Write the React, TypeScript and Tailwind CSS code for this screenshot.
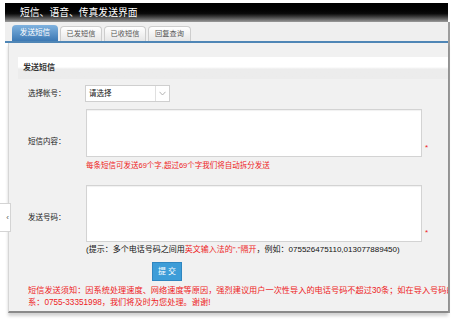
import React from "react";

const font = { fontFamily: '"Liberation Sans", "Noto Sans CJK SC", sans-serif' };

export default function App() {
  return (
    <div className="relative w-[458px] h-[320px] overflow-hidden bg-white" style={font}>
      {/* collapse handle */}
      <div className="absolute left-0 top-[203px] w-[11px] h-[29px] bg-white border border-l-0 border-[#d4d4d4] flex items-center justify-end pr-[1px] text-[8px] text-[#555] z-10">
        ‹
      </div>

      <div className="ml-[5px] pt-[3px] w-[445px]">
        {/* title bar */}
        <div className="h-[19px] w-[443px] bg-linear-to-b from-black via-[#0a0a0a] via-55% to-[#9c9c9c] flex items-center pl-[15px] text-white text-[9.8px] leading-none">
          短信、语音、传真发送界面
        </div>

        <div className="border-r-2 border-[#9d9d9d] w-[445px]">
          {/* tabs */}
          <div className="h-[19px] bg-[#efefef] flex items-end gap-[2px] pl-[7px]">
            <div className="w-[46px] h-[16px] rounded-t-[4px] bg-linear-to-b from-[#7fb2df] to-[#3c79b4] text-white text-[7.6px] flex items-center justify-center leading-none">
              发送短信
            </div>
            <div className="w-[42px] h-[15px] rounded-t-[4px] border border-b-0 border-[#cdcdcd] bg-linear-to-b from-white to-[#e6e6e6] text-[#555] text-[7.2px] flex items-center justify-center leading-none">
              已发短信
            </div>
            <div className="w-[42px] h-[15px] rounded-t-[4px] border border-b-0 border-[#cdcdcd] bg-linear-to-b from-white to-[#e6e6e6] text-[#555] text-[7.2px] flex items-center justify-center leading-none">
              已收短信
            </div>
            <div className="w-[43px] h-[15px] rounded-t-[4px] border border-b-0 border-[#cdcdcd] bg-linear-to-b from-white to-[#e6e6e6] text-[#555] text-[7.2px] flex items-center justify-center leading-none">
              回复查询
            </div>
          </div>
          <div className="h-[2px] bg-[#4f86b6]" />

          {/* content */}
          <div className="ml-[3px] h-[270px] bg-[#f1f1f1] border-l border-[#d6d6d6] border-b-2 border-b-[#8a8a8a] shadow-[0_3px_3px_rgba(0,0,0,0.18)] pt-[14px] overflow-hidden">
            <div className="ml-[9px] h-[22px] bg-linear-to-b from-white via-white via-45% to-[#ececec] to-55% flex items-center pl-[5px] text-[8px] font-bold text-[#333] leading-none">
              发送短信
            </div>

            <div className="pl-[19px]">
              {/* select row */}
              <div className="mt-[6px] flex items-center">
                <div className="w-[57px] text-[7.5px] text-[#222] leading-none">选择帐号：</div>
                <div className="w-[85px] h-[17px] bg-white border border-[#cfcfcf] flex items-stretch">
                  <div className="flex-1 flex items-center pl-[3px] text-[7.5px] text-[#111] leading-none">请选择</div>
                  <div className="w-[14px] border-l border-[#e0e0e0] flex items-center justify-center">
                    <svg width="7" height="5" viewBox="0 0 7 5">
                      <polyline points="0.5,0.8 3.5,4 6.5,0.8" fill="none" stroke="#aaaaaa" strokeWidth="0.9" />
                    </svg>
                  </div>
                </div>
              </div>

              {/* content row */}
              <div className="mt-[7px] flex items-start">
                <div className="w-[58px] pt-[27px] text-[7.5px] text-[#222] leading-[12px]">短信内容：</div>
                <div className="w-[336px] h-[48px] bg-white border border-[#d3d3d3] shadow-[inset_0_1px_1px_rgba(0,0,0,0.06)]" />
                <div className="self-end mb-[5px] ml-[3px] text-[8px] text-[#ee1c24] leading-none">*</div>
              </div>
              <div className="mt-[2px] ml-[58px] text-[7.5px] leading-[13px] text-[#ee1c24] whitespace-nowrap">
                每条短信可发送69个字,超过69个字我们将自动拆分发送
              </div>

              {/* numbers row */}
              <div className="mt-[13px] flex items-start">
                <div className="w-[58px] pt-[27px] text-[7.5px] text-[#222] leading-[12px]">发送号码：</div>
                <div className="w-[336px] h-[57px] bg-white border border-[#d3d3d3] shadow-[inset_0_1px_1px_rgba(0,0,0,0.06)]" />
                <div className="self-end mb-[5px] ml-[3px] text-[8px] text-[#ee1c24] leading-none">*</div>
              </div>
              <div className="mt-[2px] ml-[58px] text-[8px] leading-[12px] text-[#111] whitespace-nowrap">
                (提示：多个电话号码之间用<span className="text-[#ee1c24]">英文输入法的","隔开</span>，例如：075526475110,013077889450)
              </div>

              {/* submit */}
              <div className="mt-[6px] ml-[124px]">
                <button className="w-[30px] h-[19px] bg-[#3d9dd8] border border-[#2f86c0] text-white text-[8px] leading-none flex items-center justify-center">
                  提 交
                </button>
              </div>

              {/* notice */}
              <div className="mt-[4px] text-[8.2px] leading-[12px] text-[#ee1c24] whitespace-nowrap overflow-hidden">
                短信发送须知：因系统处理速度、网络速度等原因，强烈建议用户一次性导入的电话号码不超过30条；如在导入号码的过程中遇到问题，请联
              </div>
              <div className="text-[8.2px] leading-[12px] text-[#ee1c24] whitespace-nowrap">
                系：0755-33351998，我们将及时为您处理。谢谢!
              </div>
            </div>
          </div>
        </div>
      </div>
    </div>
  );
}
